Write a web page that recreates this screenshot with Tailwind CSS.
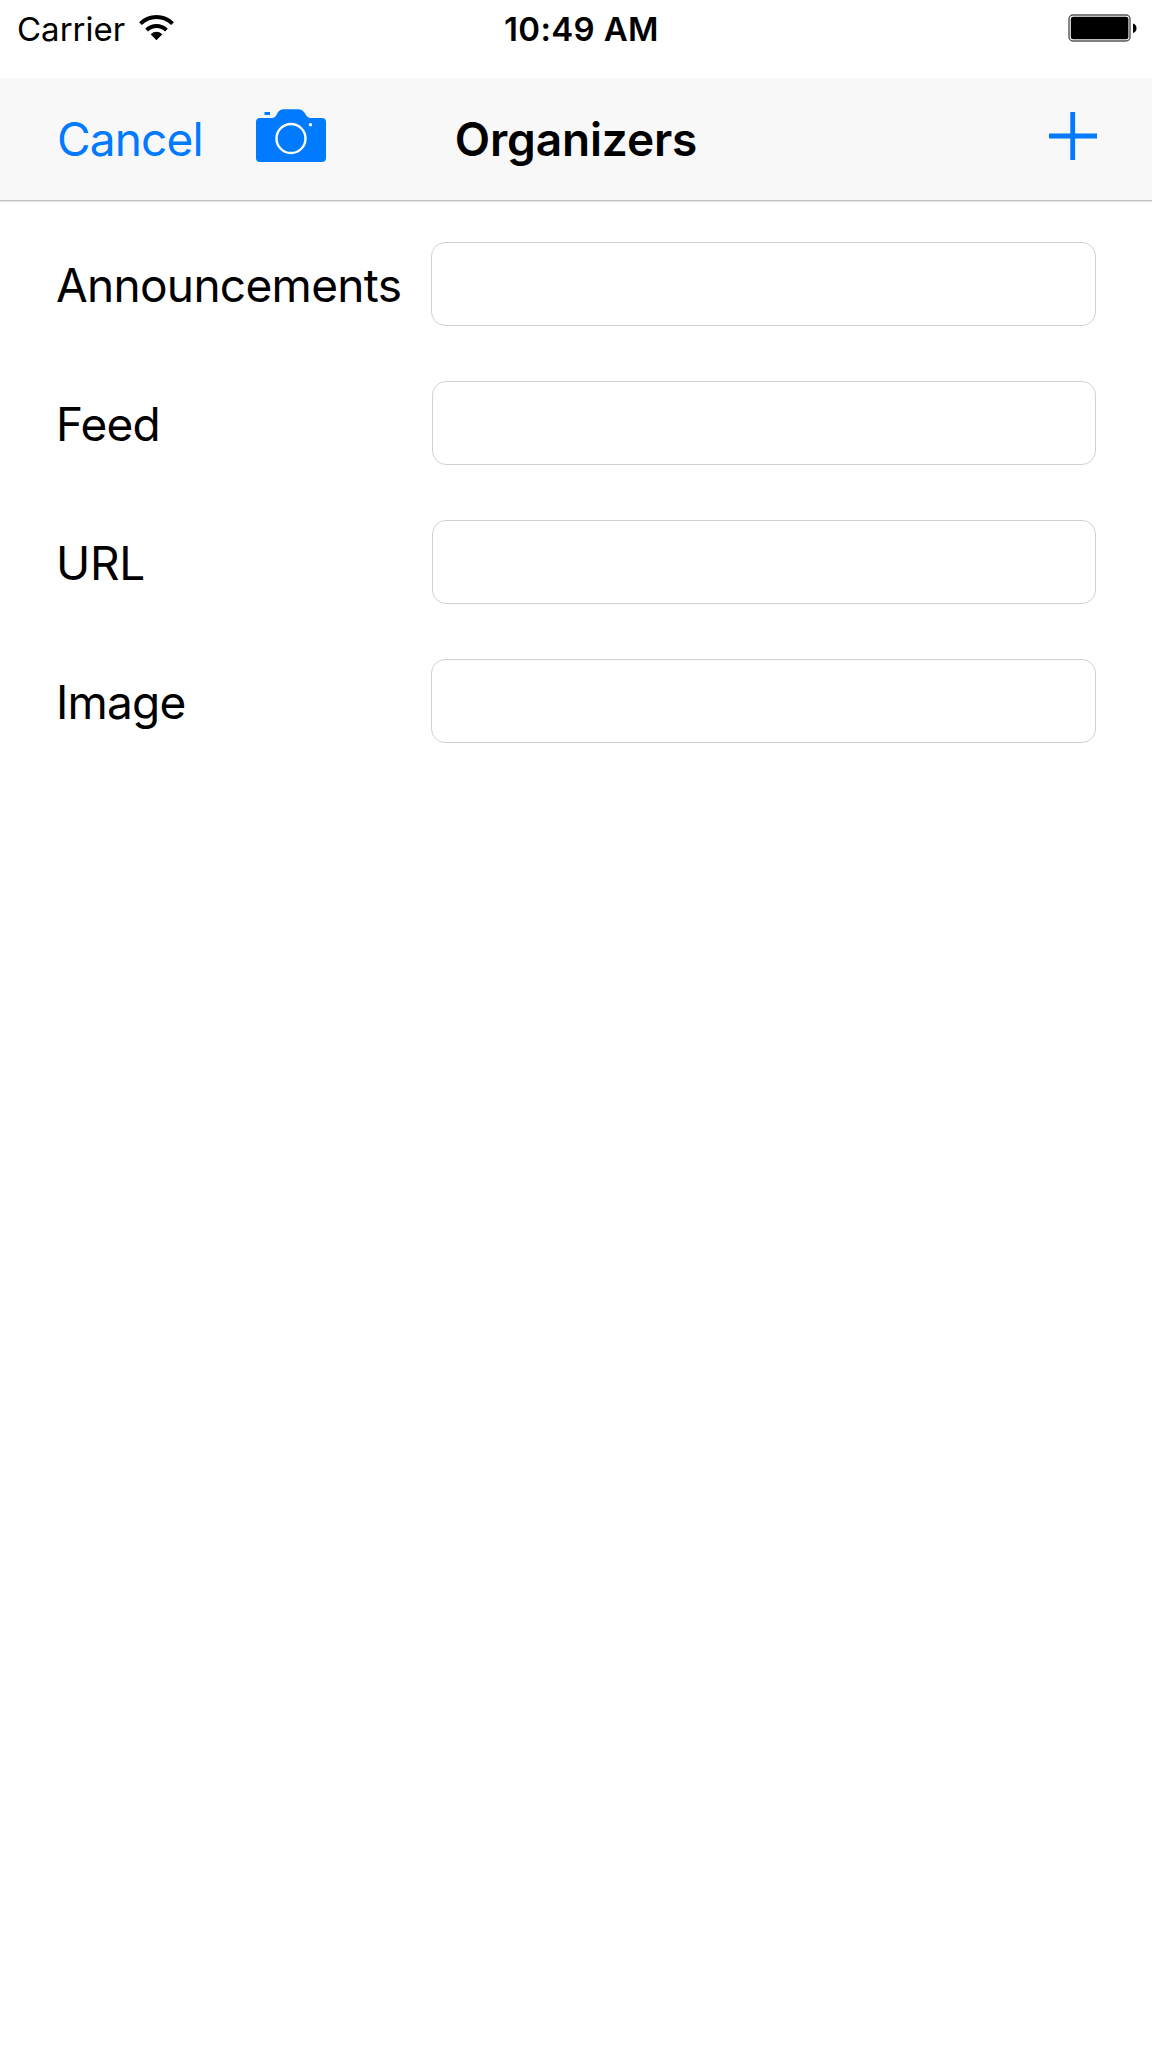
<!DOCTYPE html>
<html lang="en">
<head>
<meta charset="utf-8">
<title>Organizers</title>
<script src="https://cdn.jsdelivr.net/npm/@tailwindcss/browser@4"></script>
</head>
<body class="h-[2048px] w-[1152px] overflow-hidden bg-white font-['Inter',sans-serif] text-black">
  <div class="grid h-[78px] grid-cols-3 items-start">
    <div class="flex h-[58px] items-center pl-[17px]">
      <span class="w-[122px] text-[33px] leading-[58px] whitespace-nowrap">Carrier</span>
      <svg class="mb-[2px] h-[26px] w-[35px]" viewBox="0 0 36 26" fill="none" stroke="#000" stroke-width="4">
        <path d="M1.5 8.5A23.5 23.5 0 0 1 34.5 8.5"/>
        <path d="M7.8 15.2A14.5 14.5 0 0 1 28.2 15.2"/>
        <path d="M12 19.3Q18 14.6 24 19.3L18 25.5Z" fill="#000" stroke="none"/>
      </svg>
    </div>
    <div class="h-[58px] pl-[120px] text-[33px] leading-[58px] font-semibold tracking-[0.35px] whitespace-nowrap">10:49 AM</div>
    <div class="flex h-[58px] items-center justify-end pr-[15px]">
      <svg class="mb-[2px] h-[28px] w-[69px]" viewBox="0 0 69 28">
        <rect x="1" y="1" width="61" height="26" rx="4" fill="#fff" stroke="#555" stroke-width="1.4"/>
        <rect x="2.8" y="2.8" width="57.6" height="22.4" rx="2.5"/>
        <path d="M65 9.5Q68.5 10.5 68.5 14.3T65 19Z"/>
      </svg>
    </div>
  </div>
  <header class="grid h-[124px] grid-cols-[1fr_auto_1fr] items-center border-b border-[#e4e4e4] bg-[#f8f8f8] pb-[2px] shadow-[inset_0_-1px_0_#c2c2c2]">
    <div class="flex items-center pl-[57px] text-[#007aff]">
      <button class="w-[199px] text-left text-[46px] leading-[58px] tracking-[-0.85px]">Cancel</button>
      <svg class="mb-[6px] h-[54px] w-[70px]" viewBox="0 0 70 54">
        <path fill="currentColor" d="M4 9H16Q19 9 20.5 6L22 3Q24 .2 27 .2H43Q46 .2 48 3L50 6Q51.500 9 54 9H66Q70 9 70 13V49Q70 53 66 53H4Q0 53 0 49V13Q0 9 4 9ZM8.500 3H14V6H8.500Z"/>
        <circle cx="35" cy="29.500" r="14.500" fill="none" stroke="#fff" stroke-width="2.400"/>
        <circle cx="54.500" cy="15.700" r="1.700" fill="#fff"/>
      </svg>
    </div>
    <h1 class="text-[46px] leading-[58px] font-semibold tracking-[-0.15px]">Organizers</h1>
    <div class="flex justify-end pr-[55px] text-[#007aff]">
      <svg class="mb-[6px] h-[48px] w-[48px]" viewBox="0 0 48 48" fill="none" stroke="currentColor" stroke-width="4.800"><path d="M0 24H48M23.700 0V48"/></svg>
    </div>
  </header>
  <form class="flex flex-col gap-[55px] pt-[40px] pr-[56px] pl-[56px] text-[46px] tracking-[-0.8px]">
    <label class="flex h-[84px] items-center"><span class="w-[375px] shrink-0 pt-[2px] tracking-[-0.7px]">Announcements</span><input class="h-full min-w-0 flex-1 rounded-[14px] border border-[#d2d2d2] px-5"></label>
    <label class="flex h-[84px] items-center"><span class="w-[376px] shrink-0 pt-[2px]">Feed</span><input class="h-full min-w-0 flex-1 rounded-[14px] border border-[#d2d2d2] px-5"></label>
    <label class="flex h-[84px] items-center"><span class="w-[376px] shrink-0 pt-[2px] tracking-[-0.3px]">URL</span><input class="h-full min-w-0 flex-1 rounded-[14px] border border-[#d2d2d2] px-5"></label>
    <label class="flex h-[84px] items-center"><span class="w-[375px] shrink-0 pt-[2px]">Image</span><input class="h-full min-w-0 flex-1 rounded-[14px] border border-[#d2d2d2] px-5"></label>
  </form>
</body>
</html>
